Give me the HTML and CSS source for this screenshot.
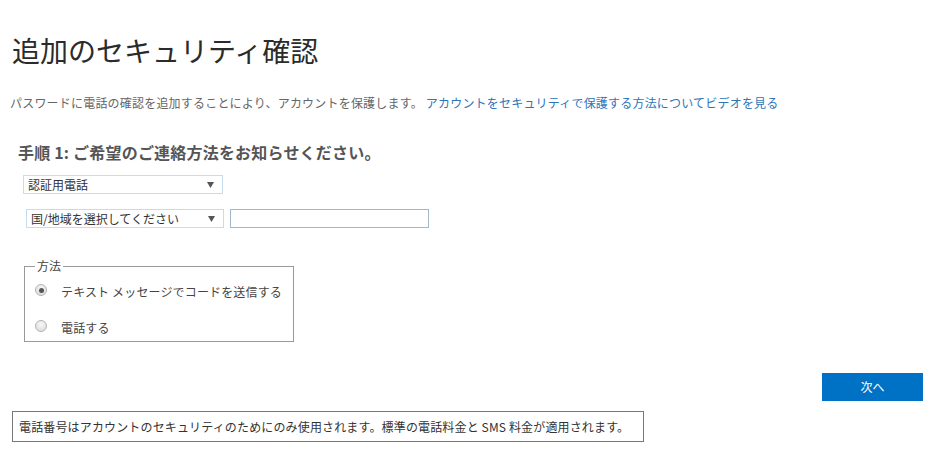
FILE: index.html
```html
<!DOCTYPE html>
<html lang="ja">
<head>
<meta charset="utf-8">
<title>追加のセキュリティ確認</title>
<link rel="stylesheet" href="styles.css">
</head>
<body>
<main class="page">
  <h1 class="title">追加のセキュリティ確認</h1>
  <p class="intro">パスワードに電話の確認を追加することにより、アカウントを保護します。 <a class="link" href="#">アカウントをセキュリティで保護する方法についてビデオを見る</a></p>

  <h2 class="step">手順 1: ご希望のご連絡方法をお知らせください。</h2>

  <div class="select select-type">
    <span>認証用電話</span>
    <svg class="caret" width="7" height="6" viewBox="0 0 7 6"><path d="M0 0h7L3.5 6z" fill="#555"/></svg>
  </div>

  <div class="phone-row">
    <div class="select select-country">
      <span>国/地域を選択してください</span>
      <svg class="caret" width="7" height="6" viewBox="0 0 7 6"><path d="M0 0h7L3.5 6z" fill="#555"/></svg>
    </div>
    <div class="text-input"></div>
  </div>

  <fieldset class="method">
    <legend class="method-legend">方法</legend>
    <label class="option">
      <span class="radio checked"></span>
      <span>テキスト メッセージでコードを送信する</span>
    </label>
    <label class="option">
      <span class="radio"></span>
      <span>電話する</span>
    </label>
  </fieldset>

  <div class="actions">
    <button class="next" type="button">次へ</button>
  </div>

  <div class="notice">電話番号はアカウントのセキュリティのためにのみ使用されます。標準の電話料金と SMS 料金が適用されます。</div>
</main>
</body>
</html>
```

FILE: styles.css
```css
* {
  box-sizing: border-box;
}

body {
  margin: 0;
  background: #fff;
  font-family: "Noto Sans CJK JP", "Noto Sans", sans-serif;
  color: #333;
}

.page {
  padding: 0 0 0 10px;
}

.title {
  margin: 33px 0 0 2px;
  font-size: 28px;
  line-height: 34px;
  font-weight: 400;
  color: #2b2b2b;
}

.intro {
  margin: 27px 0 0 0;
  font-size: 12px;
  line-height: 18px;
  letter-spacing: 0.2px;
  color: #666;
}

.link {
  color: #2e75b6;
  text-decoration: none;
}

.step {
  margin: 30px 0 0 8px;
  font-size: 16px;
  line-height: 20px;
  font-weight: 700;
  letter-spacing: 0.2px;
  color: #555;
}

.select {
  display: flex;
  align-items: center;
  justify-content: space-between;
  height: 19px;
  padding: 0 8px 0 4px;
  border: 1px solid #c3dcef;
  font-size: 12px;
  line-height: 17px;
  color: #333;
}

.select-type {
  width: 200px;
  margin: 13px 0 0 13px;
}

.phone-row {
  display: flex;
  gap: 6px;
  margin: 15px 0 0 16px;
}

.select-country {
  width: 198px;
}

.text-input {
  width: 199px;
  height: 19px;
  border: 1px solid #a2b8ca;
}

.method {
  width: 270px;
  margin: 30px 0 0 14px;
  padding: 0 10px 4px 10px;
  border: 1px solid #999;
}

.method-legend {
  padding: 0 2px;
  font-size: 12px;
  line-height: 16px;
  color: #444;
}

.option {
  display: flex;
  align-items: center;
  height: 20px;
  margin-top: 7px;
  font-size: 12px;
  letter-spacing: 0.15px;
  color: #444;
}

.option + .option {
  margin-top: 16px;
}

.radio {
  position: relative;
  width: 12px;
  height: 12px;
  margin: -2px 14px 0 0;
  border: 1px solid #b4b4b4;
  border-radius: 50%;
  background: radial-gradient(circle at 50% 35%, #f8f8f8, #d6d6d6);
}

.radio.checked::after {
  content: "";
  position: absolute;
  left: 2.5px;
  top: 2.5px;
  width: 5px;
  height: 5px;
  border-radius: 50%;
  background: #555;
}

.actions {
  display: flex;
  justify-content: flex-end;
  margin-top: 31px;
  padding-right: 23px;
}

.next {
  width: 101px;
  height: 28px;
  border: 0;
  background: #0072c6;
  color: #fff;
  font-family: inherit;
  font-size: 12px;
  line-height: 28px;
  padding: 0;
}

.notice {
  width: 632px;
  height: 31px;
  margin: 10px 0 0 2px;
  padding: 0 6px;
  border: 1px solid #777;
  font-size: 12px;
  line-height: 29px;
  letter-spacing: 0.15px;
  white-space: nowrap;
  color: #333;
}
```
